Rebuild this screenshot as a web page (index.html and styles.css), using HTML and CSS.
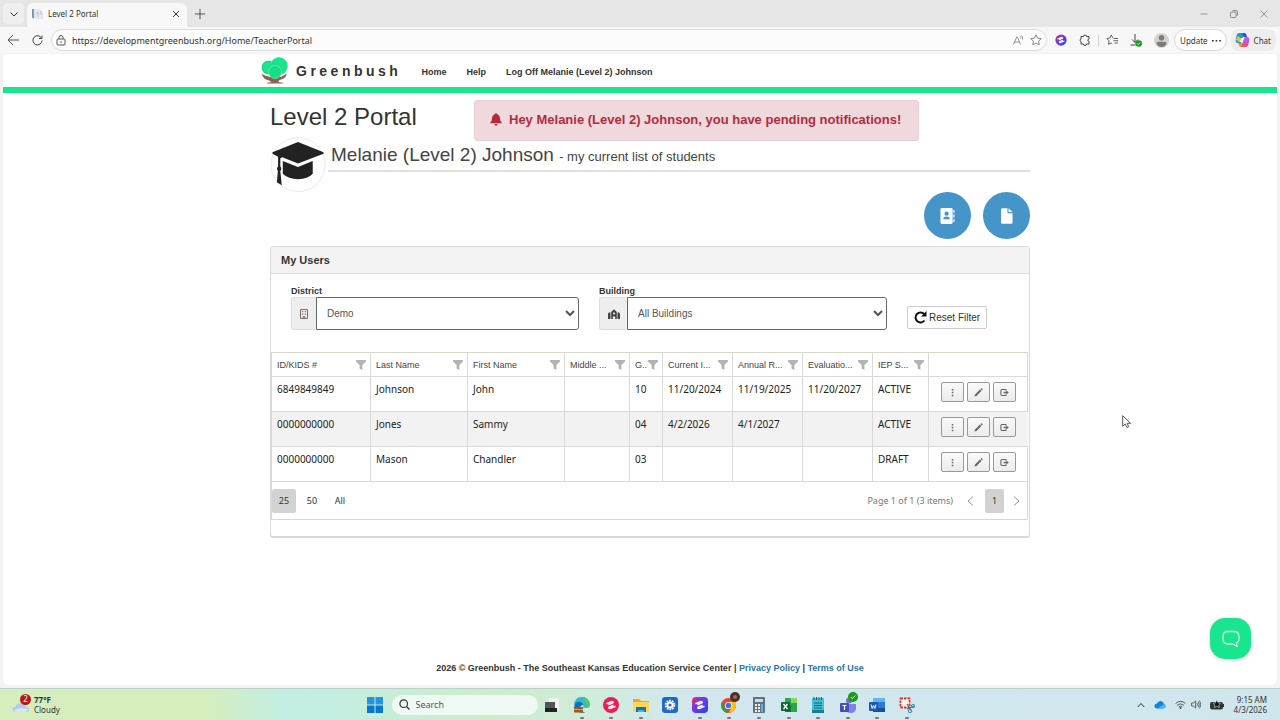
FILE: index.html
```html
<!DOCTYPE html>
<html lang="en">
<head>
<meta charset="utf-8">
<meta name="viewport" content="width=device-width, initial-scale=1">
<title>Level 2 Portal</title>
<link rel="stylesheet" href="styles.css">
</head>
<body>
<svg class="sprite" aria-hidden="true">
  <symbol id="filter" viewBox="0 0 10 10"><path d="M0 0h10v1.6L6.4 5v5L3.6 8.600V5L0 1.600z" fill="#b3b3b3"/></symbol>
  <symbol id="dots" viewBox="0 0 10 10"><path d="M4.2 1h1.700v1.700H4.200zM4.200 4.200h1.700v1.700H4.200zM4.200 7.400h1.700v1.700H4.200z" fill="#666"/></symbol>
  <symbol id="pencil" viewBox="0 0 10 10"><path d="M.5 9.500l.7-2.300 5.400-5.400 1.600 1.600-5.400 5.400zM7.200 1.200l.7-.6c.3-.3.700-.3 1 0l.5.5c.3.3.3.7 0 1l-.6.7z" fill="#666"/></symbol>
  <symbol id="exit" viewBox="0 0 10 10"><path d="M6.600 3V1.700H2l-1 1v4.600l1 1h4.600V7" fill="none" stroke="#666" stroke-width="1.200"/><path d="M4 4.300h3V2.800L9.800 5 7 7.200V5.700H4z" fill="#666"/></symbol>
  <symbol id="mark" viewBox="0 0 16 16"><path d="M3.500 6.800l5-2.200q1.500-.4 1.700 1L5.500 7.800M12.500 9.200l-5 2.200q-1.500.4-1.700-1l4.700-2.200" fill="none" stroke="#fff" stroke-width="1.500" stroke-linejoin="round"/></symbol>
</svg>
<div class="screen">
  <header class="tabs">
    <button class="tab-menu" aria-label="Tab actions"><svg width="10" height="10" viewBox="0 0 10 10"><path d="M1.500 3.500L5 7l3.500-3.500" fill="none" stroke="#333"/></svg></button>
    <div class="tab">
      <svg width="11" height="11" viewBox="0 0 11 11"><path d="M1 1h7l3 3v7H1z" fill="#e4e7ec"/><path d="M0 1h2v9H0z" fill="#6d9bc2"/><path d="M4 6l2-2v5M8 4h2M8 6h2" stroke="#b9c6d4" fill="none"/></svg>
      <span class="tab-title">Level 2 Portal</span>
      <button class="bare" aria-label="Close tab"><svg width="8" height="8" viewBox="0 0 8 8"><path d="M1 1l6 6M7 1L1 7" stroke="#333"/></svg></button>
    </div>
    <button class="bare new-tab" aria-label="New tab"><svg width="10" height="10" viewBox="0 0 10 10"><path d="M5 0v10M0 5h10" stroke="#555"/></svg></button>
    <div class="window-controls">
      <button class="bare" aria-label="Minimize"><svg width="8" height="8" viewBox="0 0 8 8"><path d="M.5 4h7" stroke="#999"/></svg></button>
      <button class="bare" aria-label="Restore"><svg width="8" height="8" viewBox="0 0 8 8"><rect x=".5" y="2" width="5.500" height="5.500" rx="1" fill="none" stroke="#888"/><path d="M2.500.6H6q1.500 0 1.500 1.500v3.500" fill="none" stroke="#888"/></svg></button>
      <button class="bare" aria-label="Close"><svg width="8" height="8" viewBox="0 0 8 8"><path d="M.5.5l7 7M7.500.5l-7 7" stroke="#999"/></svg></button>
    </div>
  </header>

  <div class="toolbar">
    <button class="bare" aria-label="Back"><svg width="12" height="12" viewBox="0 0 12 12"><path d="M6 1L1 6l5 5M1 6h11" fill="none" stroke="#555"/></svg></button>
    <button class="bare reload" aria-label="Reload"><svg width="11" height="11" viewBox="0 0 11 11"><path d="M9.600 3.200A4.600 4.600 0 1 0 10.100 5.500M10 .5v3H7" fill="none" stroke="#444"/></svg></button>
    <div class="address">
      <svg width="10" height="11" viewBox="0 0 10 11"><rect x="1" y="4" width="8" height="6" rx="1" fill="none" stroke="#555"/><path d="M3 4V2.500a2 2 0 0 1 4 0V4" fill="none" stroke="#555"/><circle cx="5" cy="7" r=".8" fill="#555"/></svg>
      <input class="url" aria-label="Address" value="https://developmentgreenbush.org/Home/TeacherPortal">
      <svg width="11" height="11" viewBox="0 0 11 11"><path d="M.5 9.500L3.700 2h.6l3.200 7.500M1.600 7h4.800M7.200 1.200q1 1 .4 2.400M8.700.4q1.700 1.800.6 4.200" fill="none" stroke="#888" stroke-width=".9"/></svg>
      <svg width="12" height="12" viewBox="0 0 12 12"><path d="M6 .8l1.600 3.300 3.600.5-2.600 2.600.6 3.600L6 9.100l-3.200 1.700.6-3.600L.8 4.600l3.600-.5z" fill="none" stroke="#777" stroke-width=".9"/></svg>
    </div>
    <div class="tools">
      <svg width="12" height="12" viewBox="0 0 16 16"><defs><linearGradient id="sc" x1="0" y1="0" x2="1" y2="1"><stop offset="0" stop-color="#f0305c"/><stop offset=".4" stop-color="#7139e8"/><stop offset="1" stop-color="#2548e8"/></linearGradient></defs><circle cx="8" cy="8" r="7.500" fill="url(#sc)"/><use href="#mark"/></svg>
      <svg width="12" height="12" viewBox="0 0 12 12"><path d="M2 2.500h2.500a1.500 1.500 0 0 1 3 0H10V5a1.200 1.200 0 0 0 0 2.400V10H7.500a1.500 1.500 0 0 1-3 0H2V7.500a1.300 1.300 0 0 1 0-2.500z" fill="none" stroke="#444"/></svg>
      <i class="divider"></i>
      <svg width="12" height="12" viewBox="0 0 12 12"><path d="M7 4L5.200 1 3.800 4l-3 .5L3 6.700l-.5 3.600L5.200 9l1 .5M7.500 4.500H12M7.500 6.700H12M8.500 9H12" fill="none" stroke="#555" stroke-width=".9"/></svg>
      <svg width="12" height="13" viewBox="0 0 12 13"><path d="M5 0v8.500M2 5.500l3 3 3-3M.5 11h5" fill="none" stroke="#444"/><circle cx="8.700" cy="9.500" r="3.300" fill="#1a9c22"/><path d="M7.200 9.500l1.100 1.100 1.900-2" fill="none" stroke="#fff" stroke-width=".8"/></svg>
      <svg width="15" height="15" viewBox="0 0 15 15"><circle cx="7.500" cy="7.500" r="7.500" fill="#d5d2d0"/><circle cx="7.500" cy="4.700" r="2.800" fill="#7d7a78"/><path d="M2.500 10.500q0-1.700 2-1.700h6q2 0 2 1.700-1.500 3.500-5 3.500t-5-3.500" fill="#7d7a78"/></svg>
      <button class="update">Update <svg width="9" height="3" viewBox="0 0 9 3"><path d="M0 1h1.700v1.400H0zM3.600 1h1.700v1.400H3.600zM7.200 1h1.700v1.400H7.200z" fill="#333"/></svg></button>
      <button class="copilot"><svg width="15" height="14" viewBox="0 0 15 14"><path d="M4 0h5L6 10H3Q0 10 .8 6l1-4Q2.400 0 4 0" fill="#169bd7"/><path d="M1 6.500L4 9h2l1-3-4-3z" fill="#e9c53b"/><path d="M8 0h2q1.300.3 2 4H9L7.600 3z" fill="#2d50d0"/><path d="M11 4h1q3 0 2.200 4l-1 4q-.7 2-2.300 2H6l3-8q.5-2 2-2" fill="#c158dc"/><path d="M6 14l1.500-4h5.800l-.7 2q-.8 2-2.400 2z" fill="#f0506c"/><path d="M3 10h4l-1 4q-1.500 0-2-2z" fill="#f08a35"/><path d="M6.500 5h2l-1.300 4h-2z" fill="#fff"/></svg> Chat</button>
    </div>
  </div>

  <div class="page">
    <nav class="site-nav">
      <div class="nav-inner">
        <a class="brand" href="#">
          <svg width="27" height="27" viewBox="0 0 27 27"><path d="M.5 17q2 5.500 7.500 6.500l2.500 1.500-4.500.7v.8h16v-.8l-5-.7 1.500-2q6.500-1.500 7.500-6.500L20 20H9l-5-1.500z" fill="#8b6250"/><circle cx="7.500" cy="10.500" r="6.800" fill="#18e58c"/><circle cx="18" cy="9" r="8.700" fill="#18e58c"/><circle cx="7.500" cy="10.500" r="6.300" fill="none" stroke="#14c47c" stroke-width=".7"/><path d="M10 6q2-5 8-5.500" fill="none" stroke="#65f0b2"/><circle cx="14" cy="15" r="6.500" fill="#18dc87" stroke="#6aeab2" stroke-width=".8"/></svg>
          <span class="brand-name">Greenbush</span>
        </a>
        <a class="nav-link" href="#">Home</a>
        <a class="nav-link" href="#">Help</a>
        <a class="nav-link" href="#">Log Off Melanie (Level 2) Johnson</a>
      </div>
    </nav>

    <main class="container">
      <div class="title-row">
        <h1 class="title">Level 2 Portal</h1>
        <div class="alert" role="alert">
          <svg width="12" height="13" viewBox="0 0 12 13"><path d="M6 0q.8 0 .8 1Q10 2 10 5.500q0 2.500 1.700 4v.8H.3v-.8Q2 8 2 5.500 2 2 5.200 1 5.200 0 6 0M4.400 11h3.200q-.2 1.700-1.600 1.700T4.400 11" fill="#b52b3c"/></svg>
          <strong>Hey Melanie (Level 2) Johnson, you have pending notifications!</strong>
        </div>
      </div>

      <div class="profile">
        <svg class="avatar" viewBox="0 0 56 56"><circle cx="28" cy="28" r="27.500" fill="#fff" stroke="#f6e3e8"/><path d="M28 5L54 15.500v1.500L28 27 12 20.600l-2 1V30q2 2 0 4.500L11.500 49l-5-3 1-11.500q-1.800-2.500.2-4.500V20L2 17v-1.500z" fill="#222"/><path d="M12.500 24.500L28 30.500 43 24.500v13Q38 43 28 43t-15.500-5.500z" fill="#222"/></svg>
        <h2 class="profile-name">Melanie (Level 2) Johnson <small class="profile-note">- my current list of students</small></h2>
      </div>

      <div class="actions">
        <button class="round" aria-label="Contacts"><svg width="15" height="16" viewBox="0 0 16 17"><path d="M2 0h10q1.500 0 1.500 1.500v14q0 1.500-1.500 1.500H2Q.5 17 .5 15.500v-14Q.5 0 2 0M14.200 2h1.300v3h-1.300zM14.200 7h1.300v3h-1.300zM14.200 12h1.300v3h-1.300z" fill="#fff"/><circle cx="7" cy="6" r="2.200" fill="#4595c9"/><path d="M3.500 12q0-3 3.500-3t3.500 3z" fill="#4595c9"/></svg></button>
        <button class="round" aria-label="New document"><svg width="12" height="16" viewBox="0 0 13 17"><path d="M1.500 0H7v5.500h5.500v10q0 1.500-1.500 1.500H1.500Q0 17 0 15.500v-14Q0 0 1.500 0M8.200 0l4.300 4.300H8.200z" fill="#fff"/></svg></button>
      </div>

      <section class="panel">
        <h3 class="panel-title">My Users</h3>
        <form class="filters">
          <div class="field">
            <label class="field-label" for="district">District</label>
            <div class="input-group">
              <span class="addon"><svg width="8" height="10" viewBox="0 0 8 10"><path d="M.5.5h7v9h-7zM3.200 9.500v-2h1.600v2" fill="none" stroke="#7c6a60"/><path d="M2 2h1.200v1.200H2zM4.800 2H6v1.200H4.800zM2 4.500h1.200v1.200H2zM4.800 4.500H6v1.200H4.800z" fill="#7c6a60"/></svg></span>
              <select class="select" id="district"><option>Demo</option></select>
            </div>
          </div>
          <div class="field">
            <label class="field-label" for="building">Building</label>
            <div class="input-group">
              <span class="addon addon-wide"><svg width="12" height="10" viewBox="0 0 12 10"><path d="M0 4.500L1 3.500h1.500V10H0zM12 4.500l-1-1H9.500V10H12zM3.200 3L6 .2 8.800 3v7H7.200V7.500H4.800V10H3.200z" fill="#444"/><circle cx="6" cy="4.500" r="1.100" fill="#eee"/></svg></span>
              <select class="select" id="building"><option>All Buildings</option></select>
            </div>
          </div>
          <button class="reset" type="button"><svg width="13" height="13" viewBox="0 0 13 13"><path d="M10.500 9.500A5 5 0 1 1 10.200 3" fill="none" stroke="#111" stroke-width="2"/><path d="M12.500 0v5.500H7z" fill="#111"/></svg>Reset Filter</button>
        </form>

        <div class="grid">
          <table class="users">
            <colgroup><col class="w-id"><col class="w-name"><col class="w-name"><col class="w-middle"><col class="w-grade"><col class="w-date"><col class="w-date"><col class="w-date"><col class="w-status"><col class="w-id"></colgroup>
            <thead><tr>
              <th><div class="head"><span>ID/KIDS #</span><svg><use href="#filter"/></svg></div></th>
              <th><div class="head"><span>Last Name</span><svg><use href="#filter"/></svg></div></th>
              <th><div class="head"><span>First Name</span><svg><use href="#filter"/></svg></div></th>
              <th><div class="head"><span>Middle ...</span><svg><use href="#filter"/></svg></div></th>
              <th><div class="head"><span>G..</span><svg><use href="#filter"/></svg></div></th>
              <th><div class="head"><span>Current I...</span><svg><use href="#filter"/></svg></div></th>
              <th><div class="head"><span>Annual R...</span><svg><use href="#filter"/></svg></div></th>
              <th><div class="head"><span>Evaluatio...</span><svg><use href="#filter"/></svg></div></th>
              <th><div class="head"><span>IEP S...</span><svg><use href="#filter"/></svg></div></th>
              <th></th>
            </tr></thead>
            <tbody>
              <tr><td>6849849849</td><td>Johnson</td><td>John</td><td></td><td>10</td><td>11/20/2024</td><td>11/19/2025</td><td>11/20/2027</td><td>ACTIVE</td>
                <td><div class="row-actions"><button aria-label="More"><svg><use href="#dots"/></svg></button><button aria-label="Edit"><svg><use href="#pencil"/></svg></button><button aria-label="Exit"><svg><use href="#exit"/></svg></button></div></td></tr>
              <tr><td>0000000000</td><td>Jones</td><td>Sammy</td><td></td><td>04</td><td>4/2/2026</td><td>4/1/2027</td><td></td><td>ACTIVE</td>
                <td><div class="row-actions"><button aria-label="More"><svg><use href="#dots"/></svg></button><button aria-label="Edit"><svg><use href="#pencil"/></svg></button><button aria-label="Exit"><svg><use href="#exit"/></svg></button></div></td></tr>
              <tr><td>0000000000</td><td>Mason</td><td>Chandler</td><td></td><td>03</td><td></td><td></td><td></td><td>DRAFT</td>
                <td><div class="row-actions"><button aria-label="More"><svg><use href="#dots"/></svg></button><button aria-label="Edit"><svg><use href="#pencil"/></svg></button><button aria-label="Exit"><svg><use href="#exit"/></svg></button></div></td></tr>
            </tbody>
          </table>
          <div class="pager">
            <button class="size current">25</button><button class="size">50</button><button class="size">All</button>
            <span class="pager-info">Page 1 of 1 (3 items)</span>
            <button class="bare" aria-label="Previous page"><svg width="7" height="10" viewBox="0 0 7 10"><path d="M6 .5L1 5l5 4.500" fill="none" stroke="#999"/></svg></button>
            <button class="page-number current">1</button>
            <button class="bare" aria-label="Next page"><svg width="7" height="10" viewBox="0 0 7 10"><path d="M1 .5L6 5 1 9.500" fill="none" stroke="#999"/></svg></button>
          </div>
        </div>
      </section>
    </main>

    <footer class="site-footer">2026 © Greenbush - The Southeast Kansas Education Service Center | <a href="#">Privacy Policy</a> | <a href="#">Terms of Use</a></footer>
    <button class="chat" aria-label="Open chat"><svg width="20" height="20" viewBox="0 0 20 20"><path d="M7 2.500h6q5 0 5 5v2q0 3.500-2.500 4.500l.5 3.500-4-2.500H7q-5 0-5-5V7.500q0-5 5-5" fill="none" stroke="#d7ffec" stroke-width="1.300" stroke-linejoin="round"/></svg></button>
    <svg class="cursor" width="10" height="14" viewBox="0 0 10 14"><path d="M.7.7v10.500l2.500-2.200 1.800 3.500 1.700-.8-1.600-3.400h3.400z" fill="#fff" stroke="#444" stroke-width=".9"/></svg>
  </div>

  <div class="taskbar">
    <div class="weather">
      <svg width="20" height="19" viewBox="0 0 20 19"><path d="M4 17q-3.500 0-3.500-2.700Q.5 12 3.500 12 4.500 8 9 8q4 0 5 4 3 0 3 2.500T14 17z" fill="#b7c8ee"/><path d="M2 16q4-5 14-2-1 3-3 3H4z" fill="#dbe5fa"/></svg>
      <span class="badge">2</span>
      <div><strong>77°F</strong><span>Cloudy</span></div>
    </div>
    <div class="dock">
      <svg class="start" width="16" height="16" viewBox="0 0 16 16"><path d="M0 0h7.500v7.500H0zM8.500 0H16v7.500H8.500z" fill="#2496df"/><path d="M0 8.500h7.500V16H0zM8.500 8.500H16V16H8.500z" fill="#0878cf"/></svg>
      <label class="search"><svg width="11" height="11" viewBox="0 0 11 11"><circle cx="4.700" cy="4.700" r="3.800" fill="none" stroke="#333" stroke-width="1.200"/><path d="M7.500 7.500l3 3" stroke="#333" stroke-width="1.200"/></svg><input placeholder="Search" aria-label="Search"></label>
      <div class="apps">
        <span class="app"><svg viewBox="0 0 16 16"><path d="M5 1h10v11H5z" fill="#f1f1ef"/><path d="M1 5h10v10H1z" fill="#555"/><path d="M1 11h12v4H1z" fill="#222"/></svg></span>
        <span class="app open"><svg viewBox="0 0 16 16"><path d="M0 8a8 8 0 0 1 16-.5q0 3.500-4 3.500-3 0-3-1 1-2-1-3.500Q3 4 0 8" fill="#35b9c9"/><path d="M.3 9q1-5 6-4 3 .8 3 3-3 0-3 2.500 0 3.500 5 5Q1 17 .3 9" fill="#136eb5"/><path d="M9 1q6 0 7 7-1 3-4 3l1-4z" fill="#5ac957"/><path d="M0 10h9v5.500H0z" fill="#9c5722"/><path d="M0 12h9v1H0z" fill="#e0a14b"/></svg></span>
        <span class="app open"><svg viewBox="0 0 16 16"><circle cx="8" cy="8" r="8" fill="#ee1d56"/><use href="#mark"/></svg></span>
        <span class="app open"><svg viewBox="0 0 16 16"><path d="M0 2h6l2 2h8v11H0z" fill="#e4aa20"/><path d="M0 5h16v10H0z" fill="#ffd65b"/><path d="M3 10h10v5H3z" fill="#1571bd"/><path d="M5 13h6v2H5z" fill="#4bb2ec"/></svg></span>
        <span class="app"><svg viewBox="0 0 16 16"><rect width="16" height="16" rx="3" fill="#2069c7"/><circle cx="8" cy="8" r="4.300" fill="none" stroke="#fff" stroke-width="2" stroke-dasharray="1.700 1"/><circle cx="8" cy="8" r="3.500" fill="#fff"/><circle cx="8" cy="8" r="1.600" fill="#2069c7"/></svg></span>
        <span class="app open"><svg viewBox="0 0 16 16"><rect width="16" height="16" rx="4" fill="url(#sc)"/><use href="#mark"/></svg></span>
        <span class="app open"><svg viewBox="0 0 16 16"><circle cx="7.500" cy="8.500" r="7.500" fill="#e84335"/><path d="M1 5l5 9 1.500 2A7.500 7.500 0 0 1 1 5" fill="#2ba24c"/><path d="M7.500 5H15q1 10-7.500 11l3.500-6z" fill="#fbc116"/><circle cx="7.500" cy="8.500" r="3.600" fill="#fff"/><circle cx="7.500" cy="8.500" r="2.800" fill="#3275e4"/></svg><svg class="app-status" viewBox="0 0 10 10"><circle cx="5" cy="5" r="5" fill="#4a302b"/><circle cx="5" cy="5" r="2" fill="#a56d55"/></svg></span>
        <span class="app open"><svg viewBox="0 0 16 16"><rect x="2" width="12" height="16" rx="1" fill="#65717c"/><path d="M4 2h8v3H4z" fill="#b8e5f5"/><path d="M4 7h2v2H4zM7 7h2v2H7zM4 10h2v2H4zM7 10h2v2H7zM4 13h2v2H4zM7 13h2v2H7z" fill="#eee"/><path d="M10 7h2v8h-2z" fill="#4db4e8"/></svg></span>
        <span class="app open"><svg viewBox="0 0 16 16"><path d="M4 1h12v14H4z" fill="#2da653"/><path d="M10 1h6v5h-6z" fill="#8ad65b"/><path d="M4 8h6v7H4z" fill="#17743c"/><rect y="5" width="9" height="9" rx="1" fill="#106834"/><path d="M2.500 7l4 5M6.500 7l-4 5" stroke="#fff" stroke-width="1.300"/></svg></span>
        <span class="app open"><svg viewBox="0 0 16 16"><rect x="2" y="1" width="12" height="15" rx="1" fill="#42bfd2"/><path d="M2 13h12v3H2z" fill="#167d94"/><path d="M4 6h8M4 8.500h8M4 11h8M4 0v3M6.500 0v3M9 0v3M11.500 0v3" stroke="#116273"/></svg></span>
        <span class="app open"><svg viewBox="0 0 16 16"><circle cx="9" cy="3.500" r="3" fill="#6c70dd"/><path d="M5 7h11v5q-1 4-5 4t-6-3z" fill="#7b83eb"/><rect y="6" width="9" height="9" rx="1" fill="#474cb8"/><path d="M2.500 8.500h4M4.500 8.500v4.500" stroke="#fff" stroke-width="1.200"/></svg><svg class="app-status" viewBox="0 0 10 10"><circle cx="5" cy="5" r="5" fill="#13a10e"/><path d="M2.800 5l1.600 1.600 2.800-3" fill="none" stroke="#fff"/></svg></span>
        <span class="app open"><svg viewBox="0 0 16 16"><rect x="4" y="1" width="12" height="14" rx="1" fill="#2d77d5"/><path d="M4 1h12v4H4z" fill="#62b5f1"/><path d="M4 11h12v4H4z" fill="#174f9f"/><rect y="5" width="9" height="9" rx="1" fill="#1859b7"/><path d="M2 7.500l1.200 4 1.300-3 1.300 3 1.200-4" fill="none" stroke="#fff"/></svg></span>
        <span class="app open"><svg viewBox="0 0 16 16"><path d="M1.500 1.500h9v9h-9z" fill="#fff" stroke="#d6342d" stroke-width="1.800" stroke-dasharray="2.500 1"/><path d="M8 7l5 8M15 9l-7 3" stroke="#666" stroke-width="1.300"/><circle cx="14" cy="9" r="1.700" fill="none" stroke="#229bc4"/><circle cx="11" cy="14" r="1.700" fill="none" stroke="#229bc4"/></svg></span>
      </div>
    </div>
    <div class="tray">
      <svg width="8" height="6" viewBox="0 0 8 6"><path d="M.8 5L4 1.500 7.200 5" fill="none" stroke="#333"/></svg>
      <svg width="12" height="9" viewBox="0 0 12 9"><path d="M3 8.500Q.5 8.500.5 6T3 3.500Q4 .7 7 1q2.500.3 3 3 1.700.5 1.700 2.300T9.500 8.500z" fill="#1684df"/><path d="M4 8.500l6-4.500q1.700.5 1.700 2.300T9.500 8.500z" fill="#4bbdf5"/></svg>
      <div class="net"><svg width="11" height="9" viewBox="0 0 11 9"><path d="M.6 3.500q4.900-4.500 9.800 0M2.200 5.300q3.300-3 6.600 0M3.800 7q1.700-1.500 3.400 0" fill="none" stroke="#444" stroke-width=".9"/><circle cx="5.500" cy="8" r=".9" fill="#444"/></svg>
      <svg width="10" height="9" viewBox="0 0 10 9"><path d="M.6 3h1.800l2.200-2v7L2.400 6H.6zM6 3q1.200 1.500 0 3M7.300 1.800q2 2.700 0 5.400M8.600.7q2.300 3.800 0 7.600" fill="none" stroke="#444" stroke-width=".8"/></svg></div>
      <svg width="14" height="10" viewBox="0 0 14 10"><rect y="2" width="13" height="7.500" rx="2" fill="#333"/><path d="M13 4h1v3h-1z" fill="#333"/><path d="M6.800 0l1.500 3 2 .3-1.500 1.800.5 2.400-2.500-1.200-2.500 1.200.5-2.400-1.500-1.800 2-.3z" fill="#111" stroke="#cde4ea" stroke-width=".6"/></svg>
      <div class="clock"><time>9:15 AM</time><time>4/3/2026</time></div>
    </div>
  </div>
</div>
</body>
</html>
```
FILE: styles.css
```css
* { box-sizing: border-box; }

body {
  margin: 0;
  font-family: "Liberation Sans", Arial, sans-serif;
  font-size: 9px;
  color: #333;
  background: #f3f3f3;
}

button, input, select { font: inherit; color: inherit; }
button { padding: 0; border: 0; background: none; }
svg { display: block; flex: none; }
.sprite { position: absolute; width: 0; height: 0; }
.screen { min-height: 100vh; display: flex; flex-direction: column; }
.bare { display: grid; place-items: center; }

/* Browser frame */
.tabs, .toolbar, .taskbar { font-family: "Noto Sans", sans-serif; font-size: 8px; }
.tabs { display: flex; align-items: center; height: 27px; padding-left: 3px; background: #e6e6e6; }
.tab-menu { display: grid; place-items: center; width: 21px; height: 21px; border-radius: 5px; background: #efefef; }
.tab {
  display: flex;
  align-items: center;
  align-self: flex-end;
  gap: 5px;
  width: 160px;
  height: 24px;
  margin-left: 3px;
  padding: 0 7px 3px 5px;
  border-radius: 6px 6px 0 0;
  background: #f8f8f8;
}
.tab-title { flex: 1; }
.new-tab { margin-left: 8px; }
.window-controls { display: flex; gap: 22px; margin-left: auto; padding-right: 12px; }

.toolbar { display: flex; align-items: center; height: 26px; padding: 0 4px 0 7px; background: #f7f7f7; }
.reload { margin: 0 8px 0 13px; }
.address {
  display: flex;
  align-items: center;
  flex: 1;
  gap: 6px;
  height: 22px;
  padding: 0 4px;
  border: 1px solid #dcdcdc;
  border-radius: 11px;
  background: #fcfcfc;
}
.url { flex: 1; min-width: 0; padding: 0; border: 0; background: none; font-size: 9px; }
.tools { display: flex; align-items: center; gap: 12px; margin-left: 8px; }
.divider { width: 1px; height: 11px; margin: 0 -5px; background: #d4d4d4; }
.update { display: flex; align-items: center; gap: 4px; height: 22px; margin: 0 -8px 0 -7px; padding: 0 5px; border: 1px solid #dadada; border-radius: 11px; background: #fff; }
.copilot { display: flex; align-items: center; gap: 4px; height: 22px; padding: 0 5px 0 4px; border-radius: 8px; background: #ededed; }

/* Site header */
.page {
  position: relative;
  display: flex;
  flex: 1;
  flex-direction: column;
  margin: 1px 3px 3px;
  border-radius: 4px 4px 6px 6px;
  background: #fff;
}
.site-nav { padding-left: 20px; border-bottom: 6px solid #18e68e; }
.nav-inner { display: flex; align-items: center; width: 778px; max-width: 100%; height: 33px; margin: 0 auto; }
.brand { display: flex; align-items: center; gap: 8px; margin-right: 20px; color: inherit; text-decoration: none; }
.brand-name { font-size: 14px; font-weight: bold; letter-spacing: 0.25em; }
.nav-link { margin-right: 20px; padding-top: 2px; color: #333; font-weight: bold; text-decoration: none; }

/* Page heading */
.container { width: 780px; max-width: 100%; margin: 0 auto; padding: 7px 0 0 20px; }
.title-row { display: flex; align-items: flex-start; }
.title { flex: none; width: 204px; margin: 3px 0 0; font-size: 24px; font-weight: normal; line-height: 28px; }
.alert {
  display: flex;
  align-items: center;
  gap: 7px;
  height: 41px;
  padding: 0 17px 2px 15px;
  border: 1px solid #ead0d5;
  border-radius: 3px;
  background: #efd9dd;
  color: #b52b3c;
  font-size: 13px;
}
.profile { display: flex; align-items: flex-start; gap: 2px; margin-top: -4px; }
.avatar { width: 56px; height: 55px; }
.profile-name {
  flex: 1;
  margin: 0;
  padding: 7px 3px 2px;
  border-bottom: 2px solid #e0e0e0;
  color: #444;
  font-size: 19px;
  font-weight: normal;
  line-height: 22px;
}
.profile-note { font-size: 13px; }
.actions { display: flex; justify-content: flex-end; gap: 12px; margin-bottom: 7px; }
.round { display: grid; place-items: center; width: 47px; height: 47px; border-radius: 50%; background: #4595c9; }

/* Users panel */
.panel { padding-bottom: 16px; border: 1px solid #d9d9d9; border-bottom-width: 2px; border-radius: 3px; }
.panel-title { margin: 0; padding: 0 10px; border-bottom: 1px solid #ddd; background: #f3f3f3; font-size: 11px; line-height: 26px; }
.filters { display: flex; align-items: flex-end; gap: 20px; padding: 11px 20px 22px; }
.field { width: 288px; }
.field-label { display: block; font-weight: bold; line-height: 12px; }
.input-group { display: flex; height: 33px; }
.addon { display: grid; place-items: center; width: 25px; border: 1px solid #ddd; border-right: 0; border-radius: 3px 0 0 3px; background: #eee; }
.addon-wide { width: 28px; }
.select { flex: 1; min-width: 0; padding: 0 0 0 6px; border: 1px solid #666; border-radius: 0 3px 3px 0; background: #fff; color: #555; font-size: 10px; }
.reset { display: flex; align-items: center; gap: 2px; height: 23px; margin: 0 0 1px; padding: 0 6px; border: 1px solid #ccc; border-radius: 2px; background: #fff; font-size: 10px; white-space: nowrap; }

.grid { margin: 0 1px 0 0; border: 1px solid #d9d9c9; }
.users { width: 100%; border-collapse: separate; border-spacing: 0; table-layout: fixed; font-family: "Noto Sans", sans-serif; font-size: 10px; color: #222; }
.w-id { width: 99px; }
.w-name { width: 97px; }
.w-middle { width: 65px; }
.w-grade { width: 33px; }
.w-date { width: 70px; }
.w-status { width: 56px; }
.users th, .users td { border: 0 solid #d9d9d9; border-width: 0 1px 1px 0; text-align: left; }
.users th:last-child, .users td:last-child { border-right: 0; }
.users th { height: 24px; padding: 0 4px 0 5px; color: #444; font-family: "Liberation Sans", Arial, sans-serif; font-size: 9px; font-weight: normal; }
.head { display: flex; align-items: center; justify-content: space-between; white-space: nowrap; }
.head svg { width: 10px; height: 10px; }
.users td { height: 35px; padding: 5px 0 0 5px; vertical-align: top; line-height: 14px; }
.users tbody tr:nth-child(even) { background: #f2f2f2; }
.row-actions { display: flex; gap: 3px; padding-left: 7px; }
.row-actions button { display: grid; place-items: center; width: 23px; height: 20px; border: 1px solid #999; border-radius: 2px; background: linear-gradient(#fafafa, #ebebeb); }
.row-actions svg { width: 9px; height: 9px; }

.pager { display: flex; align-items: center; height: 37px; padding: 0 7px 0 0; font-family: "Noto Sans", sans-serif; }
.size { width: 24px; height: 24px; margin-right: 4px; border-radius: 2px; }
.size.current, .page-number.current { background: #d2d2d2; }
.pager-info { margin: 0 14px 0 auto; color: #777; }
.page-number { width: 19px; height: 24px; margin: 0 9px 0 11px; border-radius: 2px; }

.site-footer { margin-top: auto; padding: 0 0 11px 20px; text-align: center; font-weight: bold; line-height: 12px; }
.site-footer a { color: #2a73a8; text-decoration: none; }

/* Layers over the page */
.chat { position: absolute; right: 26px; bottom: 26px; display: grid; place-items: center; width: 41px; height: 41px; border-radius: 15px; background: #18e68e; box-shadow: 0 1px 4px #0002; }
.cursor { position: absolute; left: 1119px; top: 361px; }

/* Taskbar */
.taskbar {
  display: grid;
  grid-template-columns: 1fr auto 1fr;
  align-items: center;
  height: 32px;
  border-top: 1px solid #b8d0c8;
  background: linear-gradient(90deg, #d6edbd 0 16%, #c2eee3 22%, #c4eee2 26%, #cdecc9 38%, #d1ece0 48%, #d2e6ee 54%, #cfe7ec);
}
.weather { position: relative; display: flex; align-items: center; gap: 2px; padding-left: 12px; line-height: 10px; }
.weather strong, .weather span { display: block; }
.weather .badge { position: absolute; left: 20px; top: -1px; width: 11px; height: 11px; border-radius: 50%; background: #b9161e; color: #fff; text-align: center; }
.dock { display: flex; align-items: center; padding-left: 8px; }
.start { margin-right: 9px; }
.search { display: flex; align-items: center; gap: 6px; width: 146px; height: 20px; padding: 0 7px; border-radius: 10px; background: #eff9f3; }
.search input { width: 100%; min-width: 0; padding: 0; border: 0; background: none; font-size: 9px; }
.search input::placeholder { color: #555; }
.apps { display: flex; width: 384px; }
.app { position: relative; display: grid; place-items: center; flex: 1; height: 24px; }
.app svg { width: 16px; height: 16px; }
.open::after { content: ""; position: absolute; bottom: -2px; width: 4px; height: 2px; border-radius: 1px; background: #777; }
.app .app-status { position: absolute; top: -1px; right: 4px; width: 10px; height: 10px; }
.tray { display: flex; align-items: center; justify-content: flex-end; gap: 9px; padding-right: 13px; }
.net { display: flex; gap: 5px; }
.clock { margin-left: 1px; line-height: 10px; text-align: right; }
.clock time { display: block; }
```
